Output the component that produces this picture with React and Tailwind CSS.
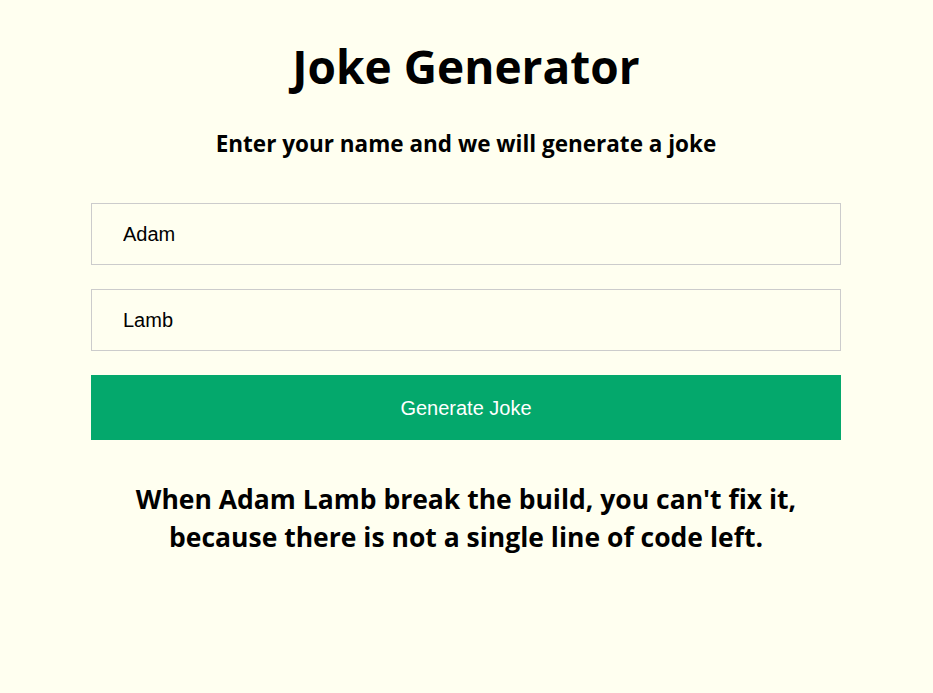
import React from "react";

export default function App() {
  const [first, setFirst] = React.useState("Adam");
  const [last, setLast] = React.useState("Lamb");
  const joke = `When ${first} ${last} break the build, you can't fix it, because there is not a single line of code left.`;

  return (
    <div className="min-h-screen bg-[#fffff0] text-black font-['Open_Sans',sans-serif] pr-px">
      <div className="mx-auto w-[750px] pt-[17px] flex flex-col">
        <h1 className="text-center text-[46px] font-bold leading-[98px]">
          Joke Generator
        </h1>
        <h3 className="mt-[14px] text-center text-[22.5px] font-bold leading-[30px]">
          Enter your name and we will generate a joke
        </h3>
        <input
          className="mt-[44px] h-[62px] w-full border border-[#cccccc] bg-transparent px-[31px] text-[20px] font-['Liberation_Sans',sans-serif] outline-none"
          value={first}
          onChange={(e) => setFirst(e.target.value)}
        />
        <input
          className="mt-[24px] h-[62px] w-full border border-[#cccccc] bg-transparent px-[31px] text-[20px] font-['Liberation_Sans',sans-serif] outline-none"
          value={last}
          onChange={(e) => setLast(e.target.value)}
        />
        <button className="mt-[24px] h-[65px] w-full bg-[#04a86c] text-[20px] text-white font-['Liberation_Sans',sans-serif]">
          Generate Joke
        </button>
        <p className="mt-[40px] px-[30px] text-center text-[26.5px] font-bold leading-[38px]">
          {joke}
        </p>
      </div>
    </div>
  );
}
